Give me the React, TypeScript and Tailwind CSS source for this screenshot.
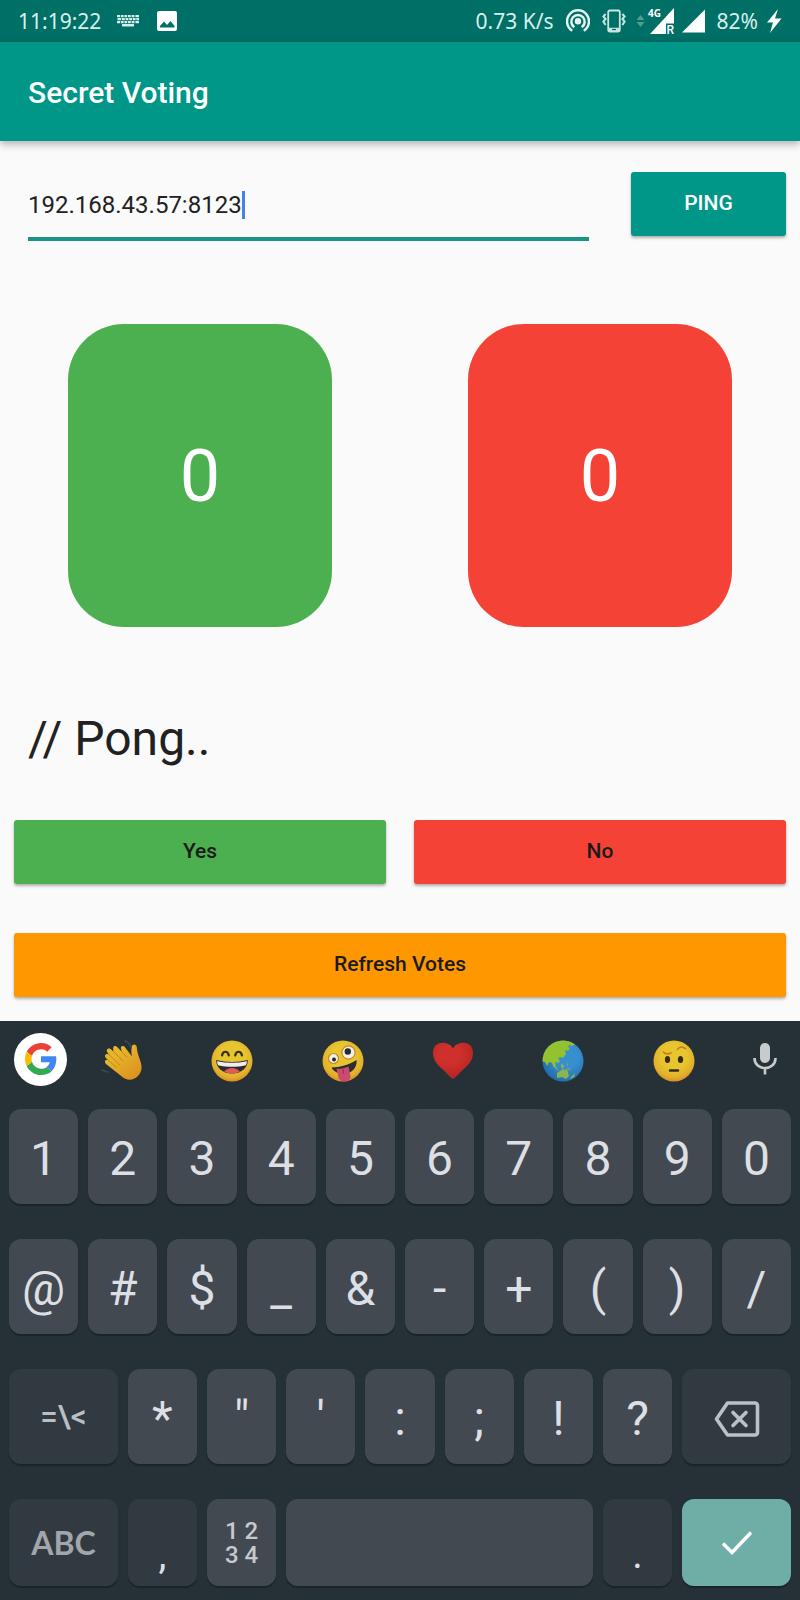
import React, { useState } from "react";

const numberKeys = ["1", "2", "3", "4", "5", "6", "7", "8", "9", "0"];
const symbolKeys = ["@", "#", "$", "_", "&", "-", "+", "(", ")", "/"];
const punctuationKeys = ["*", '"', "'", ":", ";", "!", "?"];

function StatusBar() {
  return (
    <div className="flex h-[42px] items-center justify-between bg-[#006f65] pl-[18px] pr-[18px] font-['Noto_Sans',sans-serif] text-[21px] leading-none text-[#d9efec]">
      <div className="flex items-center">
        <span>11:19:22</span>
        <svg className="ml-4 h-3 w-[22px]" viewBox="0 0 22 12" fill="#d9efec" aria-hidden="true">
          <path d="M0 0h3v2.300H0zM3.800 0h2.800v2.300H3.800zM7.400 0h2.800v2.300H7.400zM11 0h2.800v2.300H11zM14.600 0h2.800v2.300h-2.800zM18.400 0H22v2.300h-3.600zM0.500 3h3.700v2.300h-3.700zM5 3h2.800v2.300H5zM8.600 3h2.800v2.300H8.600zM12.200 3H15v2.300h-2.800zM15.800 3h2.800v2.300h-2.800zM19.300 3H22v2.300h-2.700zM0 6h3v2.300H0zM3.800 6h2.800v2.300H3.800zM7.400 6h2.800v2.300H7.400zM11 6h2.800v2.300H11zM14.600 6h2.800v2.300h-2.800zM18.400 6H22v2.300h-3.600zM5 9h12v2.500H5z" />
        </svg>
        <svg className="ml-[18px] h-5 w-5" viewBox="0 0 20 20" aria-hidden="true">
          <rect width="20" height="20" rx="2" fill="#fff" />
          <path d="M3 16.500v-1.500l4-4.500 3 3.500 3.500-4 4 5v1.500z" fill="#006f65" />
        </svg>
      </div>
      <div className="flex items-center">
        <span>0.73 K/s</span>
        <svg className="ml-3 h-6 w-6" viewBox="0 0 24 24" fill="none" stroke="#e4f5f3" strokeWidth="2.500" aria-hidden="true">
          <path d="M6.200 21.700a11 11 0 1 1 11.600 0" />
          <path d="M8.300 18.200a6.700 6.700 0 1 1 7.400 0" />
          <circle cx="12" cy="12.300" r="2" fill="#e4f5f3" />
        </svg>
        <svg className="ml-3 h-6 w-6" viewBox="0 0 24 24" fill="none" stroke="#c9e5e2" aria-hidden="true">
          <rect x="6.200" y="1.500" width="11.600" height="21" rx="1.500" strokeWidth="1.800" />
          <path d="M6.200 20.500h11.600" strokeWidth="3.500" />
          <path d="M10 20.500h4" stroke="#006f65" strokeWidth="1.200" />
          <path d="M3.600 5 1.400 7.500l2.200 2.500-2.200 2.500 2.200 3.500M20.400 5l2.200 2.500-2.200 2.500 2.200 2.500-2.200 3.500" strokeWidth="2" />
        </svg>
        <svg className="ml-2.5 h-3 w-[9px]" viewBox="0 0 9 12" fill="#519d96" aria-hidden="true">
          <path d="M4.500 0 8.500 5h-8zM4.500 12 8.500 7h-8z" />
        </svg>
        <svg className="ml-0.5 h-8 w-7" viewBox="0 0 28 32" aria-hidden="true">
          <path d="M27 3v26H3z" fill="#fff" />
          <path d="M19 18.500h9V30h-9z" fill="#006f65" />
          <text x="1" y="12" fill="#fff" fontFamily="Noto Sans, sans-serif" fontSize="10" fontWeight="700">4G</text>
          <text x="19.500" y="28.500" fill="#fff" fontFamily="Roboto, sans-serif" fontSize="12" fontWeight="500">R</text>
        </svg>
        <svg className="ml-1.5 h-6 w-6" viewBox="0 0 24 24" fill="#fff" aria-hidden="true">
          <path d="M24 0.500v23H1z" />
        </svg>
        <span className="ml-3">82%</span>
        <svg className="ml-2 h-[26px] w-4" viewBox="0 0 16 26" fill="#fff" aria-hidden="true">
          <path d="M12 1 1 14.500h6L4 25l11.500-14.500H9z" />
        </svg>
      </div>
    </div>
  );
}

function VoteCard({ count, tone, label }: { count: number; tone: string; label: string }) {
  return (
    <div aria-label={label} className={`mx-[68px] flex h-[303px] flex-1 items-center justify-center rounded-[56px] pt-0.5 text-[72px] leading-none text-white ${tone}`}>
      {count}
    </div>
  );
}

const raised = "rounded-[3px] shadow-[0_2px_3px_rgba(0,0,0,0.3)] h-16 text-[21px] font-medium flex items-center justify-center";

function FaceBase({ id }: { id: string }) {
  return (
    <>
      <defs>
        <radialGradient id={id} cx="50%" cy="40%" r="62%">
          <stop offset="0.5" stopColor="#e6c52f" />
          <stop offset="0.8" stopColor="#e3b02c" />
          <stop offset="1" stopColor="#d88722" />
        </radialGradient>
      </defs>
      <circle cx="21" cy="21" r="20.500" fill={`url(#${id})`} />
    </>
  );
}

function WaveEmoji() {
  return (
    <svg className="h-[42px] w-[42px]" viewBox="0 0 42 42" aria-hidden="true">
      <defs>
        <linearGradient id="wave" x1="0" y1="0" x2="1" y2="1">
          <stop offset="0.300" stopColor="#e6b52b" />
          <stop offset="1" stopColor="#db8b1d" />
        </linearGradient>
      </defs>
      <path d="M24 1c3 1 5 3 6 6M1 30c2 1 4 2 6 2" fill="none" stroke="#3d4850" strokeWidth="1.500" strokeLinecap="round" />
      <path d="M31 16.500c-.8-3-.8-6.500-.2-9.500.5-3.500 4.700-3 5 .3.300 4 1.200 7.500 3 12.200 3 7.500 2.200 12.500-2.300 17-4 4-11 4.500-16-.2L5 24c-2.500-2.500 0-5.500 2.500-3.500L5 18c-2.500-2.700.5-5.500 3-3.300L6.500 12.500c-2.200-3 1.300-5.700 4-2.700l2 2-.2-1.800c-1.200-4 2.300-5.200 4.600-2.200l4.100 4.200-1-3C19 6 22.500 4.500 24.500 8z" fill="url(#wave)" />
      <path d="m7.500 20.500 8 7M8 14.700l11 10.500M12.500 11.500l9.500 9.500M21 12l5 5" fill="none" stroke="#c08a1c" strokeWidth="1" strokeLinecap="round" />
    </svg>
  );
}

function GrinEmoji() {
  return (
    <svg className="h-[42px] w-[42px]" viewBox="0 0 42 42" aria-hidden="true">
      <FaceBase id="grin" />
      <path d="M11 15.500c.8-5 6-5 6.800 0M24.200 15.500c.8-5 6-5 6.800 0" fill="none" stroke="#3a2d22" strokeWidth="2.200" strokeLinecap="round" />
      <path d="M5.200 20c10 2.500 21.600 2.500 31.600 0 .4 7-5.800 13.500-15.800 13.500S4.800 27 5.200 20z" fill="#2d2b2d" />
      <path d="M6 21.200c10 2 20 2 30 0-.2 1.800-.6 3-1.200 4-9 2-18.600 2-27.600 0-.6-1-1-2.200-1.200-4z" fill="#eee" />
      <path d="M13 31.500c4-4.700 12-4.700 16 0-4.500 2.600-11.500 2.600-16 0z" fill="#df5a58" />
    </svg>
  );
}

function ZanyEmoji() {
  return (
    <svg className="h-[42px] w-[42px]" viewBox="0 0 42 42" aria-hidden="true">
      <FaceBase id="zany" />
      <circle cx="11.500" cy="18.500" r="5" fill="#efefed" stroke="#c8881d" strokeWidth="1.200" />
      <circle cx="12" cy="19.500" r="2" fill="#2b292b" />
      <circle cx="26.500" cy="12.500" r="6.600" fill="#efefed" stroke="#c8881d" strokeWidth="1.200" />
      <circle cx="25.800" cy="11.500" r="3.200" fill="#2b292b" />
      <path d="M9.500 27.500c9-.3 17-2.500 25-7.500.8 5-2 11-8 12.800-6 1.800-14 .7-17-5.300z" fill="#302c2d" />
      <path d="M14.500 28.800c4 .2 8-.6 12-2.300l2 9.500c1 6-10.500 8-12 1.500z" fill="#c94b70" />
      <path d="m21 29 .8 5" stroke="#96304e" />
    </svg>
  );
}

function HeartEmoji() {
  return (
    <svg className="h-[42px] w-[42px]" viewBox="0 0 42 42" aria-hidden="true">
      <defs>
        <radialGradient id="heart" cx="42%" cy="32%" r="65%">
          <stop offset="0.400" stopColor="#cf302c" />
          <stop offset="1" stopColor="#b72522" />
        </radialGradient>
      </defs>
      <path d="M21 8.500C17.500 1 1.500-.5 1 12.500.8 22 8 26.500 13 31.500c3 3 5.500 6.500 8 7.500 2.500-1 5-4.500 8-7.500 5-5 12.200-9.500 12-19C40.500-.5 24.500 1 21 8.500z" fill="url(#heart)" />
    </svg>
  );
}

function GlobeEmoji() {
  return (
    <svg className="h-[42px] w-[42px]" viewBox="0 0 42 42" aria-hidden="true">
      <defs>
        <radialGradient id="sea" cx="60%" cy="40%" r="65%">
          <stop offset="0.400" stopColor="#388fd0" />
          <stop offset="1" stopColor="#1f6ba9" />
        </radialGradient>
        <clipPath id="ball"><circle cx="21" cy="21" r="20.500" /></clipPath>
      </defs>
      <g clipPath="url(#ball)">
        <rect width="42" height="42" fill="url(#sea)" />
        <path d="M0 0h28l5 4.500-3 1.500-3-1-1 2 2 1-2 3-3-1 1 4-3 4-2-1-3 1 2 3-2 2-3-1 1 4-2 2-2-5-3-1-2 4-2-4-4-1z" fill="#93c12f" />
        <path d="m12 25 3 3 2 3-3-2zM19 24l3 1-1 4-2-2zM25 22l1 3-1 1zM15 33l3-2 3-2 2 1 2-1 2 7-3 3-4-2-5 1zM29 37l4-4-1 4-4 2zM24 28l5 1-2 1z" fill="#8db451" />
      </g>
    </svg>
  );
}

function BrowEmoji() {
  return (
    <svg className="h-[42px] w-[42px]" viewBox="0 0 42 42" aria-hidden="true">
      <FaceBase id="brow" />
      <ellipse cx="14.500" cy="19.500" rx="2.600" ry="3.500" fill="#38291e" />
      <ellipse cx="27.500" cy="19.500" rx="2.600" ry="3.500" fill="#38291e" />
      <path d="M10.500 12c1.500 2 5 2 7.500 1M24.500 9.500c1.500-3 5-3.500 8-.8" fill="none" stroke="#c77c1d" strokeWidth="1.600" strokeLinecap="round" />
      <path d="M17 30.500h8" stroke="#38291e" strokeWidth="2.400" strokeLinecap="round" />
    </svg>
  );
}

function GoogleMark() {
  return (
    <svg className="h-8 w-8" viewBox="0 0 48 48" aria-hidden="true">
      <path fill="#EA4335" d="M24 9.500c3.540 0 6.710 1.220 9.210 3.600l6.850-6.850C35.900 2.380 30.470 0 24 0 14.620 0 6.510 5.380 2.560 13.220l7.980 6.190C12.430 13.720 17.740 9.500 24 9.500z" />
      <path fill="#4285F4" d="M46.980 24.550c0-1.570-.15-3.090-.38-4.550H24v9.020h12.940c-.58 2.960-2.260 5.480-4.780 7.180l7.730 6c4.510-4.180 7.090-10.360 7.090-17.650z" />
      <path fill="#FBBC05" d="M10.530 28.590c-.48-1.450-.76-2.990-.76-4.590s.27-3.140.76-4.590l-7.980-6.190C.92 16.460 0 20.120 0 24c0 3.880.92 7.540 2.560 10.780l7.970-6.190z" />
      <path fill="#34A853" d="M24 48c6.480 0 11.930-2.130 15.890-5.810l-7.730-6c-2.150 1.450-4.920 2.300-8.160 2.300-6.260 0-11.570-4.220-13.470-9.910l-7.980 6.190C6.510 42.620 14.620 48 24 48z" />
    </svg>
  );
}

const emojis = [
  { name: "Waving hand", Icon: WaveEmoji },
  { name: "Grinning face", Icon: GrinEmoji },
  { name: "Zany face", Icon: ZanyEmoji },
  { name: "Red heart", Icon: HeartEmoji },
  { name: "Globe", Icon: GlobeEmoji },
  { name: "Raised eyebrow", Icon: BrowEmoji },
];

type KeyProps = { children?: React.ReactNode; label?: string; className?: string };

function Key({ children, label, className = "col-span-2 bg-[#424950] text-[48px] text-[#dcdfe3] pt-1" }: KeyProps) {
  return (
    <button
      type="button"
      aria-label={label}
      className={`flex items-center justify-center rounded-xl leading-none shadow-[0_2px_1px_rgba(20,27,32,0.6)] ${className}`}
    >
      {children}
    </button>
  );
}

function Keyboard() {
  const row = "grid grid-cols-[repeat(20,minmax(0,1fr))] gap-x-2.5";
  return (
    <section aria-label="Keyboard" className="bg-[#263137] px-[9px] pb-3.5">
      <div className="flex h-[88px] items-center pb-3">
        <button type="button" aria-label="Google search" className="ml-[5px] flex h-[53px] w-[53px] items-center justify-center rounded-full bg-white">
          <GoogleMark />
        </button>
        <div className="flex flex-1 justify-around">
          {emojis.map(({ name, Icon }) => (
            <button key={name} type="button" aria-label={name} className="mt-1">
              <Icon />
            </button>
          ))}
        </div>
        <button type="button" aria-label="Voice input" className="ml-6 mr-3.5">
          <svg className="h-8 w-6" viewBox="0 0 24 32" fill="none" stroke="#c7cbce" aria-hidden="true">
            <rect x="7" y="0" width="10" height="20" rx="5" fill="#c7cbce" stroke="none" />
            <path d="M1.500 15c0 13.500 21 13.500 21 0M12 25v6.500" strokeWidth="2.600" />
          </svg>
        </button>
      </div>
      <div className="flex flex-col gap-[35px]">
        <div className={`${row} h-[95px]`}>
          {numberKeys.map((k) => <Key key={k}>{k}</Key>)}
        </div>
        <div className={`${row} h-[95px]`}>
          {symbolKeys.map((k) => <Key key={k}>{k}</Key>)}
        </div>
        <div className={`${row} h-[95px]`}>
          <Key className="col-span-3 bg-[#313a40] text-[31px] font-medium text-[#b9bfc3]">=\&lt;</Key>
          {punctuationKeys.map((k) => <Key key={k}>{k}</Key>)}
          <Key label="Backspace" className="col-span-3 bg-[#313a40] pt-1">
            <svg className="h-9 w-[46px]" viewBox="0 0 46 36" fill="none" stroke="#bcc1c5" strokeWidth="3.600" strokeLinejoin="round" aria-hidden="true">
              <path d="M13.500 2H41a2.500 2.500 0 0 1 2.500 2.500v27A2.500 2.500 0 0 1 41 34H13.500L2.500 18z" />
              <path d="m19 11.500 13 13M32 11.500l-13 13" strokeLinecap="round" />
            </svg>
          </Key>
        </div>
        <div className={`${row} h-[87px]`}>
          <Key className="col-span-3 bg-[#313a40] font-['Lato',sans-serif] text-[32px] font-bold text-[#a0a6a9]">ABC</Key>
          <Key className="col-span-2 bg-[#313a40] pt-6 text-[40px] text-[#dcdfe3]">,</Key>
          <Key label="Number pad" className="col-span-2 bg-[#424950] text-[24px] font-medium text-[#c5cacd]">
            <span>1 2<br />3 4</span>
          </Key>
          <Key label="Space" className="col-span-8 bg-[#424950]" />
          <Key className="col-span-2 bg-[#313a40] pt-6 text-[40px] text-[#dcdfe3]">.</Key>
          <Key label="Done" className="col-span-3 bg-[#6fada7]">
            <svg className="h-6 w-8" viewBox="0 0 32 24" fill="none" stroke="#fff" strokeWidth="3.400" aria-hidden="true">
              <path d="m2 12.500 9 9L30 1.500" />
            </svg>
          </Key>
        </div>
      </div>
    </section>
  );
}

export default function App() {
  const [address, setAddress] = useState("192.168.43.57:8123");

  return (
    <div className="flex min-h-screen flex-col bg-[#fafafa] font-['Roboto',sans-serif] text-[#212121]">
      <StatusBar />
      <header className="flex h-[99px] items-center bg-[#009688] px-7 pt-0.5 shadow-[0_3px_8px_rgba(0,0,0,0.3)]">
        <h1 className="text-[30px] font-medium leading-none text-white">Secret Voting</h1>
      </header>
      <main className="flex flex-1 flex-col">
        <div className="flex items-start pl-7 pr-3.5 pt-[31px]">
          <div className="mr-[42px] flex h-[69px] flex-1 items-center border-b-4 border-[#1a9485]">
            <input
              aria-label="Server address"
              value={address}
              onChange={(e) => setAddress(e.target.value)}
              className="field-sizing-content bg-transparent p-0 text-[24px] leading-none caret-transparent outline-none"
            />
            <span className="h-7 w-[3px] bg-[#4a80e0]" />
          </div>
          <button type="button" className={`${raised} w-[155px] bg-[#009688] text-white`}>PING</button>
        </div>
        <div className="mt-[83px] flex">
          <VoteCard count={0} tone="bg-[#4caf50]" label="Yes votes" />
          <VoteCard count={0} tone="bg-[#f44336]" label="No votes" />
        </div>
        <p className="mt-[84px] px-7 text-[48px] leading-[56px]">// Pong..</p>
        <div className="mt-[53px] grid grid-cols-2 gap-7 px-3.5">
          <button type="button" className={`${raised} bg-[#4caf50] text-[#1a1a1a]`}>Yes</button>
          <button type="button" className={`${raised} bg-[#f44336] text-[#1a1a1a]`}>No</button>
        </div>
        <div className="px-3.5 pb-6 pt-[49px]">
          <button type="button" className={`${raised} w-full bg-[#ff9800] text-[#1a1a1a]`}>Refresh Votes</button>
        </div>
      </main>
      <Keyboard />
    </div>
  );
}
